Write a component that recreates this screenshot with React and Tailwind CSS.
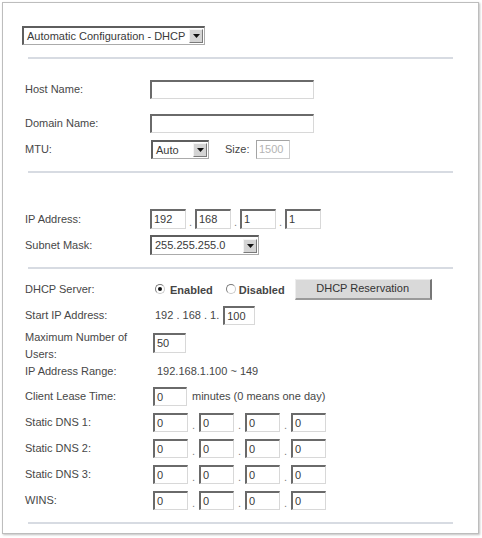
import React from "react";

const txt = "text-[11px] text-[#474747]";

function Box({ cls, value, dim }) {
  return (
    <div
      className={`${cls} box-border shrink-0 bg-white flex items-center pl-[2px] text-[11px] leading-none ${
        dim
          ? "border border-[#cdcdcd] border-t-[#a4a4a4] border-l-[#a4a4a4] text-[#b4b4b4]"
          : "border-t-2 border-l-2 border-r border-b border-t-[#6a6a6a] border-l-[#6a6a6a] border-r-[#d8d8d8] border-b-[#d8d8d8] text-[#3a3a3a]"
      }`}
    >
      {value}
    </div>
  );
}

function Arrow() {
  return (
    <div className="ml-auto mr-[1px] w-[14px] h-[14px] box-border bg-[#d4d4d4] border border-t-[#f4f4f4] border-l-[#f4f4f4] border-r-[#7a7a7a] border-b-[#7a7a7a] flex items-center justify-center">
      <svg width="7" height="4" viewBox="0 0 7 4">
        <path d="M0 0h7L3.5 4z" fill="#111" />
      </svg>
    </div>
  );
}

function Select({ cls, value }) {
  return (
    <div
      className={`${cls} box-border shrink-0 bg-white flex items-center pl-[3px] text-[11px] text-[#3a3a3a] border-t-2 border-l-2 border-r border-b border-t-[#5e5e5e] border-l-[#5e5e5e] border-r-[#ababab] border-b-[#ababab]`}
    >
      <span>{value}</span>
      <Arrow />
    </div>
  );
}

function Dot({ cls }) {
  return (
    <span className={`${cls} shrink-0 self-end text-center text-[11px] leading-[14px] text-[#808080]`}>.</span>
  );
}

function Quad({ vals, boxCls, dotCls }) {
  return (
    <div className="flex h-full">
      <Box cls={boxCls} value={vals[0]} />
      <Dot cls={dotCls} />
      <Box cls={boxCls} value={vals[1]} />
      <Dot cls={dotCls} />
      <Box cls={boxCls} value={vals[2]} />
      <Dot cls={dotCls} />
      <Box cls={boxCls} value={vals[3]} />
    </div>
  );
}

function Sep({ cls }) {
  return <div className={`${cls} ml-[25px] w-[425px] h-[2px] bg-[#d7dbe2]`} />;
}

function Radio({ checked }) {
  return (
    <div className="w-[10px] h-[10px] box-border rounded-full border border-[#7a7a7a] border-b-[#c8c8c8] border-r-[#c8c8c8] bg-white flex items-center justify-center">
      {checked && <div className="w-[4px] h-[4px] rounded-full bg-[#111]" />}
    </div>
  );
}

export default function App() {
  return (
    <div className="w-[482px] h-[538px] bg-white overflow-hidden font-['Liberation_Sans',Arial,sans-serif]">
      <div className="ml-[2px] mt-[2px] w-[477px] h-[532px] box-border border border-[#bdbdbd] shadow-[1px_1px_2px_rgba(0,0,0,0.25)] flex flex-col">
        {/* mode select */}
        <div className="mt-[23px] ml-[19px] h-[19px] flex">
          <Select cls="w-[183px] h-[19px]" value="Automatic Configuration - DHCP" />
        </div>

        <Sep cls="mt-[12px]" />

        {/* Host name */}
        <div className="mt-[21px] h-[19px] flex items-center">
          <div className={`w-[147px] pl-[22px] ${txt}`}>Host Name:</div>
          <Box cls="w-[164px] h-[19px]" value="" />
        </div>
        <div className="mt-[15px] h-[19px] flex items-center">
          <div className={`w-[147px] pl-[22px] ${txt}`}>Domain Name:</div>
          <Box cls="w-[164px] h-[19px]" value="" />
        </div>
        <div className="mt-[7px] h-[19px] flex items-center">
          <div className={`w-[148px] pl-[22px] ${txt}`}>MTU:</div>
          <Select cls="w-[58px] h-[19px]" value="Auto" />
          <div className={`ml-[16px] w-[31px] ${txt}`}>Size:</div>
          <Box cls="w-[34px] h-[19px]" value="1500" dim />
        </div>

        <Sep cls="mt-[12px]" />

        {/* IP */}
        <div className="mt-[36px] h-[20px] flex items-center">
          <div className={`w-[147px] pl-[22px] ${txt}`}>IP Address:</div>
          <Quad vals={["192", "168", "1", "1"]} boxCls="w-[36px] h-[20px]" dotCls="w-[9px]" />
        </div>
        <div className="mt-[6px] h-[20px] flex items-center">
          <div className={`w-[147px] pl-[22px] ${txt}`}>Subnet Mask:</div>
          <Select cls="w-[109px] h-[20px]" value="255.255.255.0" />
        </div>

        <Sep cls="mt-[12px]" />

        {/* DHCP */}
        <div className="mt-[10px] h-[21px] flex items-center">
          <div className={`w-[152px] pl-[22px] ${txt}`}>DHCP Server:</div>
          <div className="flex items-center mt-[1px]">
            <div className="mt-[-3px]"><Radio checked /></div>
            <span className="ml-[5px] text-[11px] font-bold text-[#454545]">Enabled</span>
            <div className="ml-[13px] mt-[-3px]"><Radio /></div>
            <span className="ml-[3px] text-[11px] font-bold text-[#454545]">Disabled</span>
          </div>
          <div className="ml-[10px] w-[137px] h-[21px] box-border bg-[#d9d9d9] border-t border-l border-t-[#ededed] border-l-[#ededed] border-r-2 border-b-2 border-r-[#767676] border-b-[#9a9a9a] flex items-center justify-center pb-[2px] text-[11px] text-[#333]">
            DHCP Reservation
          </div>
        </div>
        <div className="mt-[6px] h-[19px] flex items-center">
          <div className={`w-[152px] pl-[22px] ${txt}`}>Start IP Address:</div>
          <span className={`${txt} mr-[4px]`}>192 . 168 . 1.</span>
          <Box cls="w-[32px] h-[19px]" value="100" />
        </div>
        <div className="mt-[4px] flex items-start">
          <div className={`w-[150px] pl-[22px] leading-[17px] ${txt}`}>
            Maximum Number of
            <br />
            Users:
          </div>
          <div className="mt-[4px]">
            <Box cls="w-[33px] h-[20px]" value="50" />
          </div>
        </div>
        <div className="h-[16px] flex items-center">
          <div className={`w-[154px] pl-[22px] ${txt}`}>IP Address Range:</div>
          <span className={txt}>192.168.1.100 ~ 149</span>
        </div>
        <div className="mt-[8px] h-[19px] flex items-center">
          <div className={`w-[150px] pl-[22px] ${txt}`}>Client Lease Time:</div>
          <Box cls="w-[34px] h-[19px]" value="0" />
          <span className={`ml-[5px] ${txt}`}>minutes (0 means one day)</span>
        </div>
        {["Static DNS 1:", "Static DNS 2:", "Static DNS 3:", "WINS:"].map((l) => (
          <div key={l} className="mt-[7px] h-[19px] flex items-center">
            <div className={`w-[150px] pl-[22px] ${txt}`}>{l}</div>
            <Quad vals={["0", "0", "0", "0"]} boxCls="w-[35px] h-[19px]" dotCls="w-[11px]" />
          </div>
        ))}

        <Sep cls="mt-[12px]" />
      </div>
    </div>
  );
}
